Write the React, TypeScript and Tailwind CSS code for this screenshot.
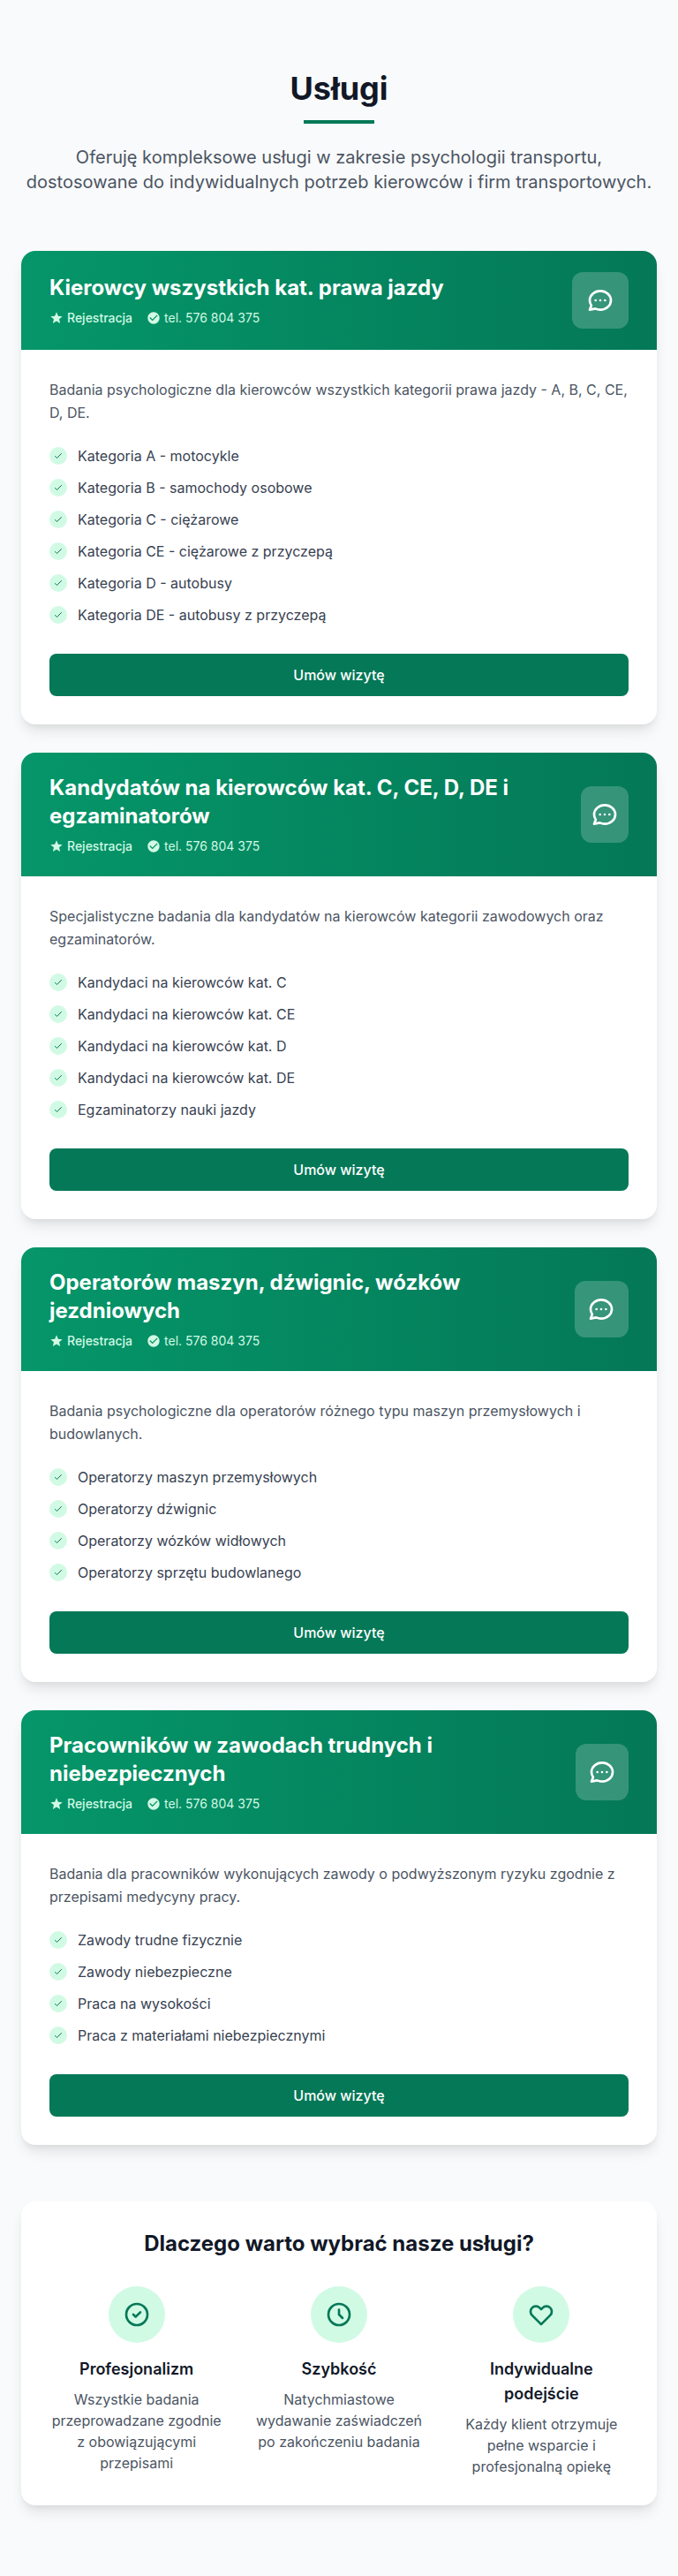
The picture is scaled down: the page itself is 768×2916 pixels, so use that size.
type Service = { title: string; description: string; items: string[] };

const services: Service[] = [
  {
    title: 'Kierowcy wszystkich kat. prawa jazdy',
    description: 'Badania psychologiczne dla kierowców wszystkich kategorii prawa jazdy - A, B, C, CE, D, DE.',
    items: [
      'Kategoria A - motocykle',
      'Kategoria B - samochody osobowe',
      'Kategoria C - ciężarowe',
      'Kategoria CE - ciężarowe z przyczepą',
      'Kategoria D - autobusy',
      'Kategoria DE - autobusy z przyczepą',
    ],
  },
  {
    title: 'Kandydatów na kierowców kat. C, CE, D, DE i egzaminatorów',
    description: 'Specjalistyczne badania dla kandydatów na kierowców kategorii zawodowych oraz egzaminatorów.',
    items: [
      'Kandydaci na kierowców kat. C',
      'Kandydaci na kierowców kat. CE',
      'Kandydaci na kierowców kat. D',
      'Kandydaci na kierowców kat. DE',
      'Egzaminatorzy nauki jazdy',
    ],
  },
  {
    title: 'Operatorów maszyn, dźwignic, wózków jezdniowych',
    description: 'Badania psychologiczne dla operatorów różnego typu maszyn przemysłowych i budowlanych.',
    items: [
      'Operatorzy maszyn przemysłowych',
      'Operatorzy dźwignic',
      'Operatorzy wózków widłowych',
      'Operatorzy sprzętu budowlanego',
    ],
  },
  {
    title: 'Pracowników w zawodach trudnych i niebezpiecznych',
    description: 'Badania dla pracowników wykonujących zawody o podwyższonym ryzyku zgodnie z przepisami medycyny pracy.',
    items: [
      'Zawody trudne fizycznie',
      'Zawody niebezpieczne',
      'Praca na wysokości',
      'Praca z materiałami niebezpiecznymi',
    ],
  },
];

const benefits = [
  {
    title: 'Profesjonalizm',
    text: 'Wszystkie badania przeprowadzane zgodnie z obowiązującymi przepisami',
    path: 'M9 12l2 2 4-4m6 2a9 9 0 11-18 0 9 9 0 0118 0z',
  },
  {
    title: 'Szybkość',
    text: 'Natychmiastowe wydawanie zaświadczeń po zakończeniu badania',
    path: 'M12 8v4l3 3m6-3a9 9 0 11-18 0 9 9 0 0118 0z',
  },
  {
    title: 'Indywidualne podejście',
    text: 'Każdy klient otrzymuje pełne wsparcie i profesjonalną opiekę',
    path: 'M4.318 6.318a4.5 4.5 0 000 6.364L12 20.364l7.682-7.682a4.5 4.5 0 00-6.364-6.364L12 7.636l-1.318-1.318a4.5 4.5 0 00-6.364 0z',
  },
];

function OutlineIcon({ path, className }: { path: string; className: string }) {
  return (
    <svg className={className} fill="none" stroke="currentColor" viewBox="0 0 24 24">
      <path strokeLinecap="round" strokeLinejoin="round" strokeWidth={2} d={path} />
    </svg>
  );
}

function ServiceCard({ title, description, items }: Service) {
  return (
    <article className="overflow-hidden rounded-2xl bg-white shadow-[0_10px_15px_-3px_rgba(0,0,0,0.1),0_4px_6px_-2px_rgba(0,0,0,0.05)]">
      <div className="bg-[linear-gradient(to_right,#059669,#047857)] px-8 py-6">
        <div className="flex items-center justify-between">
          <div>
            <h3 className="mb-2 text-2xl font-bold text-white">{title}</h3>
            <div className="flex items-center gap-4 text-sm text-[#d1fae5]">
              <span className="flex items-center gap-1 font-medium">
                <svg className="size-4" fill="currentColor" viewBox="0 0 24 24">
                  <path d="M12 17.27L18.18 21l-1.64-7.03L22 9.24l-7.19-.61L12 2 9.19 8.63 2 9.24l5.46 4.73L5.82 21z" />
                </svg>
                Rejestracja
              </span>
              <span className="flex items-center gap-1">
                <svg className="size-4" fill="currentColor" viewBox="0 0 24 24">
                  <path d="M12 2C6.48 2 2 6.48 2 12s4.48 10 10 10 10-4.48 10-10S17.52 2 12 2zm-2 15l-5-5 1.41-1.41L10 14.17l7.59-7.59L19 8l-9 9z" />
                </svg>
                tel. 576 804 375
              </span>
            </div>
          </div>
          <div className="flex h-16 w-16 items-center justify-center rounded-xl bg-white/20">
            <OutlineIcon
              className="size-8 text-white"
              path="M8 12h.01M12 12h.01M16 12h.01M21 12c0 4.418-4.03 8-9 8a9.863 9.863 0 01-4.255-.949L3 20l1.395-3.72C3.512 15.042 3 13.574 3 12c0-4.418 4.03-8 9-8s9 3.582 9 8z"
            />
          </div>
        </div>
      </div>
      <div className="p-8">
        <p className="mb-6 leading-relaxed text-[#4b5563]">{description}</p>
        <ul className="mb-8 space-y-3">
          {items.map((item) => (
            <li key={item} className="flex items-center gap-3 text-[#374151]">
              <span className="flex size-5 shrink-0 items-center justify-center rounded-full bg-[#d1fae5]">
                <OutlineIcon className="size-3 text-[#047857]" path="M5 13l4 4L19 7" />
              </span>
              {item}
            </li>
          ))}
        </ul>
        <button className="block w-full rounded-lg bg-[#047857] px-6 py-3 font-medium text-white">Umów wizytę</button>
      </div>
    </article>
  );
}

export default function App() {
  return (
    <section className="bg-[#f9fafb] px-6 py-20 font-[Inter,sans-serif]">
      <header className="mb-16 text-center">
        <h2 className="mb-4 text-4xl font-bold text-[#111827]">Usługi</h2>
        <div className="mx-auto mb-6 h-1 w-20 bg-[#047857]" />
        <p className="mx-auto max-w-3xl text-xl text-[#4b5563]">
          Oferuję kompleksowe usługi w zakresie psychologii transportu, dostosowane do indywidualnych potrzeb kierowców i
          firm transportowych.
        </p>
      </header>
      <div className="grid gap-8">
        {services.map((service) => (
          <ServiceCard key={service.title} {...service} />
        ))}
      </div>
      <div className="mt-16 rounded-2xl bg-white p-8 shadow-[0_10px_15px_-3px_rgba(0,0,0,0.1),0_4px_6px_-2px_rgba(0,0,0,0.05)]">
        <h3 className="mb-8 text-center text-2xl font-bold text-[#111827]">Dlaczego warto wybrać nasze usługi?</h3>
        <div className="grid grid-cols-3 gap-8">
          {benefits.map((benefit) => (
            <div key={benefit.title} className="text-center">
              <div className="mx-auto mb-4 flex size-16 items-center justify-center rounded-full bg-[#d1fae5]">
                <OutlineIcon className="size-8 text-[#047857]" path={benefit.path} />
              </div>
              <h4 className="mb-2 text-lg font-semibold text-[#111827]">{benefit.title}</h4>
              <p className="text-[#4b5563]">{benefit.text}</p>
            </div>
          ))}
        </div>
      </div>
    </section>
  );
}
